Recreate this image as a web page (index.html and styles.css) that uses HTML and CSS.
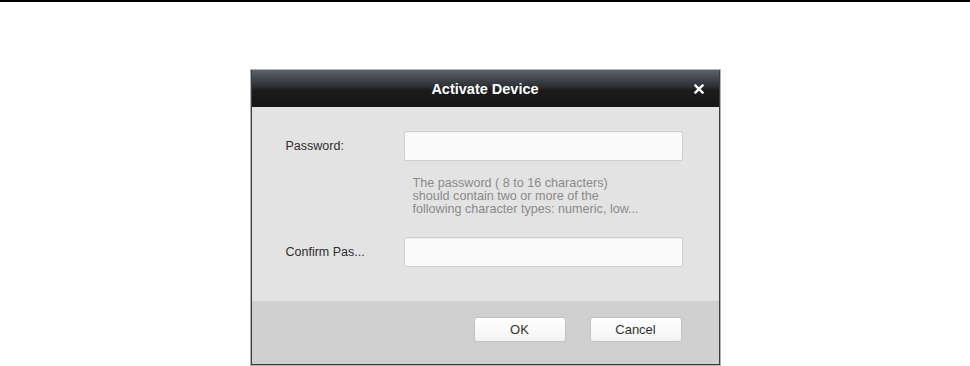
FILE: index.html
```html
<!DOCTYPE html>
<html lang="en">
<head>
    <meta charset="UTF-8">
    <title>Activate Device</title>
    <link rel="stylesheet" href="styles.css">
</head>
<body>
    <div class="top-rule"></div>

    <div class="dialog">
        <div class="frame">
            <div class="title-bar">
                <span class="title">Activate Device</span>
                <button class="close" title="Close">
                    <svg width="10" height="10" viewBox="0 0 10 10">
                        <path d="M1.5 1.5 L8.5 8.5 M8.5 1.5 L1.5 8.5" stroke="#fff" stroke-width="2.4" stroke-linecap="square"/>
                    </svg>
                </button>
            </div>

            <div class="content">
                <div class="row">
                    <label class="label">Password:</label>
                    <input class="field" type="password">
                </div>
                <p class="hint">
                    The password ( 8 to 16 characters)<br>
                    should contain two or more of the<br>
                    following character types: numeric, low...
                </p>
                <div class="row">
                    <label class="label">Confirm Pas...</label>
                    <input class="field" type="password">
                </div>
            </div>

            <div class="footer">
                <button class="btn">OK</button>
                <button class="btn">Cancel</button>
            </div>
        </div>
    </div>
</body>
</html>
```

FILE: styles.css
```css
* {
    margin: 0;
    padding: 0;
    box-sizing: border-box;
}

body {
    font-family: "Liberation Sans", Arial, sans-serif;
    background: #fff;
    color: #333;
}

.top-rule {
    height: 2px;
    background: #000;
}

.dialog {
    width: 471px;
    margin: 67px auto 0;
    border: 1px solid #b4b4b4;
}

.frame {
    border: 1px solid #3c3c3c;
    border-top: none;
    background: #e3e3e3;
}

/* Barre de titre */
.title-bar {
    height: 37px;
    position: relative;
    display: flex;
    align-items: center;
    justify-content: center;
    background: linear-gradient(to bottom, #5b626b 0%, #2c2f33 45%, #1c1c1c 55%, #151515 100%);
}

.title {
    color: #fff;
    font-weight: bold;
    font-size: 14.5px;
}

.close {
    position: absolute;
    right: 15px;
    top: 14px;
    background: none;
    border: none;
    display: flex;
    cursor: pointer;
}

/* Contenu */
.content {
    height: 194px;
    padding: 24px 0 0 34px;
}

.row {
    display: flex;
    align-items: center;
}

.label {
    width: 118px;
    font-size: 12.5px;
    color: #2e2e2e;
}

.field {
    width: 279px;
    height: 30px;
    background: #fafafa;
    border: 1px solid #cfcfcf;
    border-radius: 2px;
    box-shadow: inset 0 1px 1px rgba(0, 0, 0, 0.04);
}

.hint {
    margin: 16px 0 21px 127px;
    font-size: 12.6px;
    line-height: 13px;
    color: #8a8a8a;
}

/* Pied */
.footer {
    height: 63px;
    background: #d0d0d0;
    display: flex;
    justify-content: flex-end;
    gap: 24px;
    padding: 16px 37px 0 0;
}

.btn {
    width: 92px;
    height: 25px;
    font-family: inherit;
    font-size: 13px;
    color: #333;
    background: linear-gradient(to bottom, #ffffff 0%, #f3f3f3 100%);
    border: 1px solid #c2c2c2;
    border-radius: 3px;
    cursor: pointer;
}
```
